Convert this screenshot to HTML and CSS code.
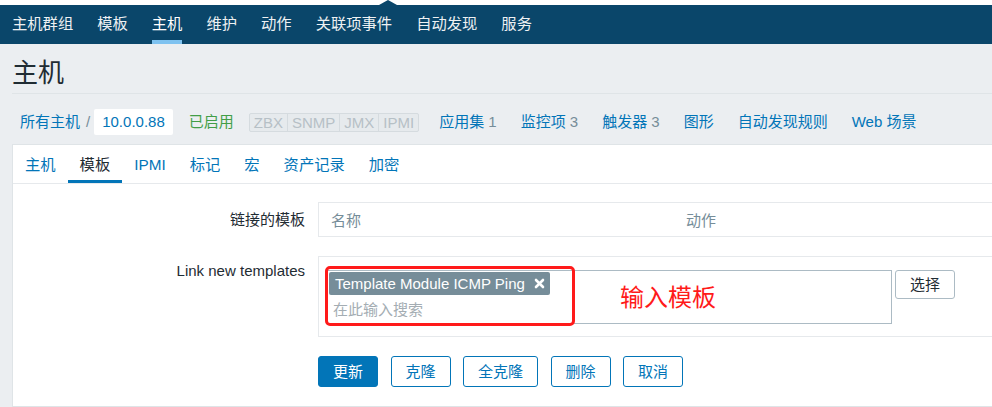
FILE: index.html
```html
<!DOCTYPE html>
<html lang="zh-CN">
<head>
<meta charset="utf-8">
<title>主机</title>
<link rel="stylesheet" href="styles.css">
</head>
<body>
<div class="topstrip"></div>
<nav class="mainnav">
  <a class="nav-item">主机群组</a>
  <a class="nav-item">模板</a>
  <a class="nav-item is-active">主机</a>
  <a class="nav-item">维护</a>
  <a class="nav-item">动作</a>
  <a class="nav-item">关联项事件</a>
  <a class="nav-item">自动发现</a>
  <a class="nav-item">服务</a>
</nav>
<header class="page-header"><h1 class="page-title">主机</h1></header>
<div class="crumbs">
  <a class="crumb-link">所有主机</a><span class="crumb-sep">/</span><span class="crumb-host">10.0.0.88</span>
  <span class="status-on">已启用</span>
  <span class="avail"><span class="avail-cell">ZBX</span><span class="avail-cell">SNMP</span><span class="avail-cell">JMX</span><span class="avail-cell">IPMI</span></span>
  <div class="host-links">
    <a class="hl">应用集 <span class="count">1</span></a>
    <a class="hl">监控项 <span class="count">3</span></a>
    <a class="hl">触发器 <span class="count">3</span></a>
    <a class="hl">图形</a>
    <a class="hl">自动发现规则</a>
    <a class="hl">Web 场景</a>
  </div>
</div>
<section class="panel">
  <div class="tabs">
    <a class="tab">主机</a>
    <a class="tab is-active">模板</a>
    <a class="tab">IPMI</a>
    <a class="tab">标记</a>
    <a class="tab">宏</a>
    <a class="tab">资产记录</a>
    <a class="tab">加密</a>
  </div>
  <form class="form">
    <div class="form-label label-a">链接的模板</div>
    <div class="form-field">
      <div class="linked-table">
        <div class="th">名称</div>
        <div class="th">动作</div>
      </div>
    </div>
    <div class="form-label label-b">Link new templates</div>
    <div class="form-field">
      <div class="new-box">
        <div class="ms-row">
          <div class="ms">
            <div class="ms-tags">
              <span class="ms-tag">Template Module ICMP Ping
                <svg class="ms-x" width="11" height="11" viewBox="0 0 11 11"><path d="M2 2 L9 9 M9 2 L2 9" stroke="#ffffff" stroke-width="2.6" stroke-linecap="round"/></svg>
              </span>
            </div>
            <div class="ms-input">在此输入搜索</div>
            <div class="note-box"></div>
            <div class="note-text">输入模板</div>
          </div>
          <button type="button" class="btn-select">选择</button>
        </div>
      </div>
    </div>
    <div></div>
    <div class="actions">
      <button type="button" class="btn btn-primary">更新</button>
      <button type="button" class="btn">克隆</button>
      <button type="button" class="btn">全克隆</button>
      <button type="button" class="btn">删除</button>
      <button type="button" class="btn">取消</button>
    </div>
  </form>
</section>
</body>
</html>
```
FILE: styles.css
```css
* { box-sizing: border-box; }
html, body { overflow: hidden; }
body {
  margin: 0;
  background: #ebeef1;
  color: #1f2c33;
  font-family: "Liberation Sans", "Noto Sans CJK SC", sans-serif;
  font-size: 15px;
  line-height: 18px;
}
a { text-decoration: none; }

.topstrip { height: 5px; background: #ffffff; }

.mainnav {
  position: relative;
  display: flex;
  height: 39px;
  background: #0a466a;
  font-size: 15.3px;
}
.mainnav::before {
  content: "";
  position: absolute;
  left: 379px;
  top: -5px;
  border-left: 9px solid transparent;
  border-right: 9px solid transparent;
  border-bottom: 5px solid #0a466a;
}
.nav-item {
  display: flex;
  align-items: center;
  height: 39px;
  margin: 0 12px;
  padding-top: 2px;
  border-bottom: 4px solid transparent;
  color: #eef1f3;
}
.nav-item.is-active { color: #ffffff; border-bottom-color: #7ec2f0; }

.page-header {
  margin-left: 12px;
  height: 50px;
  border-bottom: 1px solid #dfe4e7;
  display: flex;
  align-items: center;
  padding-top: 8px;
}
.page-title {
  margin: 0;
  font-size: 26px;
  line-height: 30px;
  font-weight: normal;
  color: #1f2c33;
}

.crumbs {
  display: flex;
  align-items: center;
  height: 26px;
  margin: 15px 0 9px 20px;
}
.crumb-link { color: #0275b8; }
.crumb-sep { margin: 0 4px 0 6px; color: #768d99; }
.crumb-host {
  background: #ffffff;
  color: #0275b8;
  height: 26px;
  line-height: 26px;
  padding: 0 8px;
  border-radius: 2px;
}
.status-on { margin-left: 16px; color: #429e47; }
.avail {
  display: flex;
  margin-left: 15px;
  border: 1px solid #d5dbdf;
  border-radius: 2px;
  background: #e6eaed;
}
.avail-cell {
  padding: 0 4px;
  line-height: 17px;
  color: #b6c0c6;
  border-left: 1px solid #d5dbdf;
}
.avail-cell:first-child { border-left: 0; }
.host-links { display: flex; gap: 24px; margin-left: 20px; }
.hl { color: #0275b8; }
.count { color: #768d99; }

.panel {
  margin-left: 12px;
  margin-right: -40px;
  background: #ffffff;
  border: 1px solid #dfe4e7;
  border-right: 0;
}
.tabs {
  display: flex;
  height: 39px;
  border-bottom: 1px solid #e6e9ec;
  font-size: 15.3px;
}
.tab {
  height: 38px;
  line-height: 35px;
  padding: 2px 12px 0;
  border-bottom: 3px solid transparent;
  color: #0275b8;
}
.tab.is-active { color: #1f2c33; border-bottom-color: #0275b8; }

.form {
  display: grid;
  grid-template-columns: 292px 1fr;
  column-gap: 13px;
  row-gap: 19px;
  padding: 18px 0 19px;
}
.form-label { text-align: right; }
.label-a { line-height: 35px; }
.label-b { line-height: 30px; }

.linked-table {
  display: grid;
  grid-template-columns: 355px 1fr;
  height: 35px;
  border: 1px solid #e6e9ec;
}
.th { padding-left: 12px; line-height: 35px; color: #768d99; }

.new-box {
  border: 1px solid #e6e9ec;
  padding: 13px 7px 12px;
}
.ms-row { display: flex; align-items: flex-start; }
.ms {
  position: relative;
  width: 566px;
  height: 54px;
  border: 1px solid #acbbc4;
  padding: 0 2px;
}
.ms-tags { display: flex; padding-top: 1px; }
.ms-tag {
  display: flex;
  align-items: center;
  gap: 9px;
  height: 23px;
  padding: 0 5px 0 6px;
  border-radius: 2px;
  background: #768d99;
  color: #ffffff;
}
.ms-x { display: block; }
.ms-input {
  height: 28px;
  line-height: 30px;
  padding-left: 4px;
  color: #a4adb3;
}
.note-box {
  position: absolute;
  left: -2px;
  top: -5px;
  width: 250px;
  height: 60px;
  border: 3px solid #ff1a1a;
  border-radius: 5px;
}
.note-text {
  position: absolute;
  left: 293px;
  top: 12px;
  font-size: 24px;
  line-height: 30px;
  color: #ff1a1a;
}
.btn-select {
  margin-left: 3px;
  width: 60px;
  height: 29px;
  padding: 0;
  border: 1px solid #acbbc4;
  border-radius: 3px;
  background: #ffffff;
  color: #1f2c33;
  font: inherit;
}

.actions { display: flex; gap: 12.5px; }
.btn {
  height: 31px;
  padding: 0 14px;
  border: 1px solid #0275b8;
  border-radius: 3px;
  background: #ffffff;
  color: #0275b8;
  font: inherit;
}
.btn-primary { background: #0275b8; color: #ffffff; }
```
